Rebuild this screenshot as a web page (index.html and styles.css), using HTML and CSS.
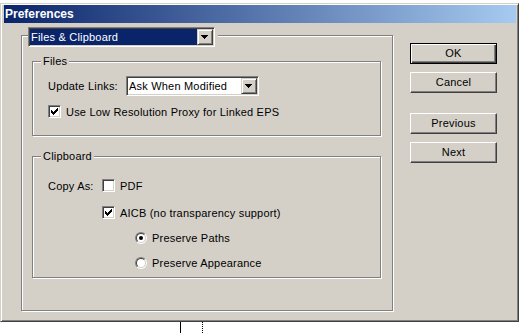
FILE: index.html
```html
<!DOCTYPE html>
<html>
<head>
<meta charset="utf-8">
<title>Preferences</title>
<link rel="stylesheet" href="styles.css">
</head>
<body>
<div class="window">
  <div class="titlebar">Preferences</div>
  <div class="client">
    <div class="panel">
      <div class="combo combo-section">
        <span class="combo-text selected">Files &amp; Clipboard</span>
        <span class="drop-btn"><svg width="7" height="4" viewBox="0 0 7 4" shape-rendering="crispEdges"><path d="M0 0h7v1h-1v1h-1v1h-1v1h-1v-1h-1v-1h-1v-1h-1z" fill="#000"/></svg></span>
      </div>
      <div class="group group-files">
        <span class="legend">Files</span>
        <div class="row row-links">
          <span class="label label-links">Update Links:</span>
          <div class="combo combo-links">
            <span class="combo-text">Ask When Modified</span>
            <span class="drop-btn"><svg width="7" height="4" viewBox="0 0 7 4" shape-rendering="crispEdges"><path d="M0 0h7v1h-1v1h-1v1h-1v1h-1v-1h-1v-1h-1v-1h-1z" fill="#000"/></svg></span>
          </div>
        </div>
        <div class="row row-proxy">
          <span class="check"><svg width="7" height="7" viewBox="0 0 7 7" shape-rendering="crispEdges"><path d="M6 0h1v1h-1zM5 1h2v1h-2zM0 2h1v1h-1zM4 2h3v1h-3zM0 3h2v1h-2zM3 3h3v1h-3zM0 4h5v1h-5zM1 5h3v1h-3zM2 6h1v1h-1z" fill="#000"/></svg></span>
          <span class="opt-text">Use Low Resolution Proxy for Linked EPS</span>
        </div>
      </div>
      <div class="group group-clip">
        <span class="legend">Clipboard</span>
        <div class="row row-copy">
          <span class="label label-copy">Copy As:</span>
          <span class="check"></span>
          <span class="opt-text">PDF</span>
        </div>
        <div class="row row-aicb">
          <span class="check"><svg width="7" height="7" viewBox="0 0 7 7" shape-rendering="crispEdges"><path d="M6 0h1v1h-1zM5 1h2v1h-2zM0 2h1v1h-1zM4 2h3v1h-3zM0 3h2v1h-2zM3 3h3v1h-3zM0 4h5v1h-5zM1 5h3v1h-3zM2 6h1v1h-1z" fill="#000"/></svg></span>
          <span class="opt-text">AICB (no transparency support)</span>
        </div>
        <div class="row row-radio">
          <span class="radio"><span class="radio-in"><span class="dot"></span></span></span>
          <span class="opt-text">Preserve Paths</span>
        </div>
        <div class="row row-radio">
          <span class="radio"><span class="radio-in"></span></span>
          <span class="opt-text">Preserve Appearance</span>
        </div>
      </div>
    </div>
    <div class="buttons">
      <div class="btn default">OK</div>
      <div class="btn btn-cancel">Cancel</div>
      <div class="btn btn-prev">Previous</div>
      <div class="btn btn-next">Next</div>
    </div>
  </div>
</div>
<div class="desktop">
  <span class="mark-solid"></span>
  <span class="mark-dotted"></span>
</div>
</body>
</html>
```
FILE: styles.css
```css
* { box-sizing: border-box; }
html, body { margin: 0; padding: 0; background: #fff; }
body {
  font-family: "Liberation Sans", Arial, sans-serif;
  font-size: 11px;
  letter-spacing: 0.2px;
  color: #000;
}

.window {
  margin-top: 3px;
  width: 519px;
  height: 319px;
  background: #d4d0c8;
  border: 1px solid;
  border-color: #d4d0c8 #404040 #404040 #d4d0c8;
  box-shadow: inset 1px 1px 0 #fff, inset -1px -1px 0 #808080;
  padding: 1px 2px 3px 3px;
  display: flex;
  flex-direction: column;
}

.titlebar {
  height: 18px;
  line-height: 18px;
  padding-left: 1px;
  background: linear-gradient(to right, #0a246a, #a6caf0);
  color: #fff;
  font-weight: bold;
  font-size: 12px;
  letter-spacing: 0;
}

.client {
  flex: 1;
  display: flex;
  align-items: flex-start;
}

.panel {
  margin: 12px 0 0 17px;
  width: 372px;
  height: 276px;
  border: 1px solid #808080;
  box-shadow: inset 1px 1px 0 #fff, 1px 1px 0 #fff;
  display: flex;
  flex-direction: column;
  align-items: flex-start;
}

.combo {
  display: flex;
  height: 20px;
  padding: 1px;
  border: 1px solid;
  border-color: #808080 #fff #fff #808080;
  box-shadow: inset 1px 1px 0 #404040, inset -1px -1px 0 #d4d0c8;
  background: #fff;
}
.combo-text {
  flex: 1;
  line-height: 16px;
  padding-left: 1px;
  white-space: nowrap;
}
.combo-text.selected {
  background: #0a246a;
  color: #fff;
}
.combo-section {
  margin: -9px 0 0 6px;
  width: 187px;
  box-shadow: inset 1px 1px 0 #404040, inset -1px -1px 0 #d4d0c8, 2px 0 0 1px #d4d0c8;
}

.drop-btn {
  width: 16px;
  height: 16px;
  background: #d4d0c8;
  border: 1px solid;
  border-color: #d4d0c8 #404040 #404040 #d4d0c8;
  box-shadow: inset 1px 1px 0 #fff, inset -1px -1px 0 #808080;
  padding: 5px 0 0 3px;
}
.drop-btn svg { display: block; }

.group {
  margin-left: 10px;
  width: 349px;
  border: 1px solid #808080;
  box-shadow: inset 1px 1px 0 #fff, 1px 1px 0 #fff;
  padding-left: 15px;
  display: flex;
  flex-direction: column;
  align-items: flex-start;
}
.group-files { margin-top: 14px; height: 75px; }
.group-clip { margin-top: 20px; height: 122px; }

.legend {
  margin: -7px 0 0 -7px;
  padding: 0 2px;
  height: 13px;
  line-height: 13px;
  background: #d4d0c8;
}

.row {
  display: flex;
  align-items: center;
  white-space: nowrap;
}
.row-links { margin-top: 8px; height: 20px; }
.label-links { width: 78px; }
.combo-links { width: 133px; }

.row-proxy { margin-top: 9px; height: 13px; }
.row-copy { margin-top: 16px; height: 13px; }
.label-copy { width: 54px; }
.row-aicb { margin: 14px 0 0 54px; height: 13px; }
.row-radio { margin: 12px 0 0 87px; height: 13px; }

.opt-text { margin-left: 5px; }
.row-radio .opt-text { margin-left: 5px; }

.check {
  width: 13px;
  height: 13px;
  flex: none;
  border: 1px solid;
  border-color: #808080 #fff #fff #808080;
  box-shadow: inset 1px 1px 0 #404040, inset -1px -1px 0 #d4d0c8;
  background: #fff;
  padding: 2px;
}
.check svg { display: block; }

.radio {
  width: 12px;
  height: 12px;
  flex: none;
  border-radius: 50%;
  border: 1px solid;
  border-color: #808080 #fff #fff #808080;
  display: flex;
}
.radio-in {
  width: 10px;
  height: 10px;
  border-radius: 50%;
  border: 1px solid;
  border-color: #404040 #d4d0c8 #d4d0c8 #404040;
  background: #fff;
  display: flex;
  align-items: center;
  justify-content: center;
}
.dot {
  width: 4px;
  height: 4px;
  border-radius: 50%;
  background: #000;
}

.buttons {
  margin: 20px 0 0 17px;
  display: flex;
  flex-direction: column;
}
.btn {
  width: 87px;
  height: 21px;
  line-height: 19px;
  text-align: center;
  background: #d4d0c8;
  border: 1px solid;
  border-color: #fff #404040 #404040 #fff;
  box-shadow: inset -1px -1px 0 #808080;
}
.btn.default {
  border-color: #000;
  box-shadow: inset 1px 1px 0 #fff, inset -1px -1px 0 #404040, inset -2px -2px 0 #808080;
}
.btn-cancel { margin-top: 8px; }
.btn-prev { margin-top: 20px; }
.btn-next { margin-top: 8px; }

.desktop {
  height: 11px;
  display: flex;
}
.mark-solid {
  margin-left: 180px;
  width: 1px;
  background: #000;
}
.mark-dotted {
  margin-left: 21px;
  width: 1px;
  background: repeating-linear-gradient(to bottom, #000 0 1px, transparent 1px 2px);
}
```
